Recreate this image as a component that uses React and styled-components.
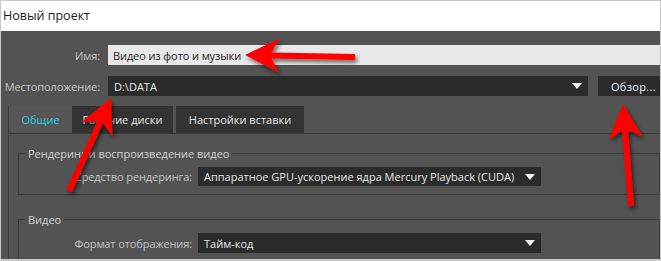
import React from "react";
import styled, { createGlobalStyle } from "styled-components";

const GlobalStyle = createGlobalStyle`
  html, body {
    margin: 0;
    padding: 0;
    background: #ffffff;
  }
  body {
    font-family: "Open Sans", "Noto Sans", sans-serif;
  }
`;

const Window = styled.div`
  position: relative;
  width: 661px;
  height: 261px;
  box-sizing: border-box;
  border: 1px solid #c9c9c9;
  border-bottom-width: 2px;
  display: flex;
  flex-direction: column;
  overflow: hidden;
  background: #ffffff;
`;

const TitleBar = styled.div`
  flex: none;
  height: 30px;
  display: flex;
  align-items: center;
  padding-left: 2px;
  padding-bottom: 2px;
  box-sizing: border-box;
  font-size: 12.5px;
  color: #1a1a1a;
`;

const Body = styled.div`
  flex: 1;
  min-height: 0;
  background: #535353;
  display: flex;
  flex-direction: column;
  padding-top: 14px;
  overflow: hidden;
`;

const Row = styled.div`
  flex: none;
  display: flex;
  align-items: center;
  height: ${(p) => p.$h || 20}px;
  margin-bottom: ${(p) => p.$mb || 0}px;
`;

const Label = styled.div`
  width: ${(p) => p.$w}px;
  flex: none;
  text-align: right;
  padding-right: ${(p) => p.$gap || 8}px;
  box-sizing: content-box;
  font-size: 11px;
  letter-spacing: -0.1px;
  color: #c4c4c4;
  white-space: nowrap;
`;

const TextInput = styled.div`
  flex: 1;
  height: 20px;
  background: #e8e8e8;
  color: #1d1d1d;
  font-size: 11px;
  letter-spacing: -0.1px;
  display: flex;
  align-items: center;
  padding-left: 5px;
`;

const Select = styled.div`
  ${(p) => (p.$w ? `width: ${p.$w}px; flex: none;` : "flex: 1;")}
  height: ${(p) => p.$h || 20}px;
  box-sizing: border-box;
  background: #2b2b2b;
  color: #e6e6e6;
  font-size: 11px;
  display: flex;
  align-items: center;
  justify-content: space-between;
  padding: 0 6px 0 6px;
  white-space: nowrap;
`;

const Caret = styled.span`
  width: 0;
  height: 0;
  border-left: 5px solid transparent;
  border-right: 5px solid transparent;
  border-top: 6px solid #f2f2f2;
`;

const BrowseButton = styled.div`
  margin-left: 10px;
  width: 62px;
  flex: none;
  height: 20px;
  background: #2b2b2b;
  color: #e8f2ff;
  font-size: 11px;
  display: flex;
  align-items: center;
  padding-left: 13px;
  box-sizing: border-box;
  white-space: nowrap;
  letter-spacing: 0.3px;
`;

const TabStrip = styled.div`
  flex: none;
  display: flex;
  margin: 10px 0 0 7px;
  height: 27px;
  border-bottom: 1px solid #3a3a3a;
`;

const Tab = styled.div`
  width: ${(p) => p.$w}px;
  margin-right: ${(p) => p.$mr || 0}px;
  box-sizing: border-box;
  display: flex;
  align-items: center;
  justify-content: center;
  font-size: 11px;
  background: ${(p) => (p.$active ? "#565656" : "#333333")};
  color: ${(p) => (p.$active ? "#1fd0ea" : "#e4e4e4")};
  border-left: ${(p) => (p.$active ? "1px solid #3c3c3c" : "none")};
`;

const TabPanel = styled.div`
  flex: none;
  margin-left: 7px;
  border-left: 1px solid #3c3c3c;
  padding: 12px 0 0 9px;
  display: flex;
  flex-direction: column;
`;

const Group = styled.fieldset`
  flex: none;
  margin: 0 0 ${(p) => p.$mb || 0}px 0;
  padding: 6px 0 0 0;
  border: 1px solid #3b3b3b;
  min-width: 0;
  height: ${(p) => p.$h}px;
  box-sizing: border-box;
`;

const Legend = styled.legend`
  margin-left: 6px;
  padding: 0 3px;
  font-size: 11px;
  color: #d2d2d2;
`;

const Arrows = styled.svg`
  position: absolute;
  left: 0;
  top: 0;
  pointer-events: none;
`;

function Arrow({ x1, y1, x2, y2 }) {
  const dx = x2 - x1;
  const dy = y2 - y1;
  const len = Math.hypot(dx, dy);
  const ux = dx / len;
  const uy = dy / len;
  const px = -uy;
  const py = ux;
  const headLen = 34;
  const headW = 17;
  const bx = x2 - ux * headLen;
  const by = y2 - uy * headLen;
  const nx = x2 - ux * (headLen - 9);
  const ny = y2 - uy * (headLen - 9);
  const head = `${x2},${y2} ${bx + px * headW},${by + py * headW} ${nx},${ny} ${bx - px * headW},${by - py * headW}`;
  return (
    <g filter="url(#shadow)">
      <line x1={x1} y1={y1} x2={nx} y2={ny} stroke="#ff0000" strokeWidth="6" />
      <polygon points={head} fill="#ff0000" />
    </g>
  );
}

export default function App() {
  return (
    <>
      <GlobalStyle />
      <Window>
        <TitleBar>Новый проект</TitleBar>
        <Body>
          <Row $mb={11}>
            <Label $w={99}>Имя:</Label>
            <TextInput>Видео из фото и музыки</TextInput>
          </Row>
          <Row>
            <Label $w={99}>Местоположение:</Label>
            <Select>
              D:\DATA
              <Caret />
            </Select>
            <BrowseButton>Обзор...</BrowseButton>
          </Row>
          <TabStrip>
            <Tab $w={64} $active>
              Общие
            </Tab>
            <Tab $w={101} $mr={3}>Рабочие диски</Tab>
            <Tab $w={128}>Настройки вставки</Tab>
          </TabStrip>
          <TabPanel>
            <Group $h={49} $mb={17}>
              <Legend>Рендеринг и воспроизведение видео</Legend>
              <Row $h={19}>
                <Label $w={173} $gap={6}>Средство рендеринга:</Label>
                <Select $w={343} $h={19}>
                  Аппаратное GPU-ускорение ядра Mercury Playback (CUDA)
                  <Caret />
                </Select>
              </Row>
            </Group>
            <Group $h={60}>
              <Legend>Видео</Legend>
              <Row>
                <Label $w={173} $gap={6}>Формат отображения:</Label>
                <Select $w={343}>
                  Тайм-код
                  <Caret />
                </Select>
              </Row>
            </Group>
          </TabPanel>
        </Body>
        <Arrows width="661" height="261" viewBox="0 0 661 261">
          <defs>
            <filter id="shadow" x="-50%" y="-50%" width="200%" height="200%">
              <feDropShadow dx="2" dy="3" stdDeviation="2" floodColor="#000" floodOpacity="0.55" />
            </filter>
          </defs>
          <Arrow x1={354} y1={56} x2={244} y2={54} />
          <Arrow x1={68} y1={190} x2={110} y2={97} />
          <Arrow x1={630} y1={205} x2={622} y2={103} />
        </Arrows>
      </Window>
    </>
  );
}
